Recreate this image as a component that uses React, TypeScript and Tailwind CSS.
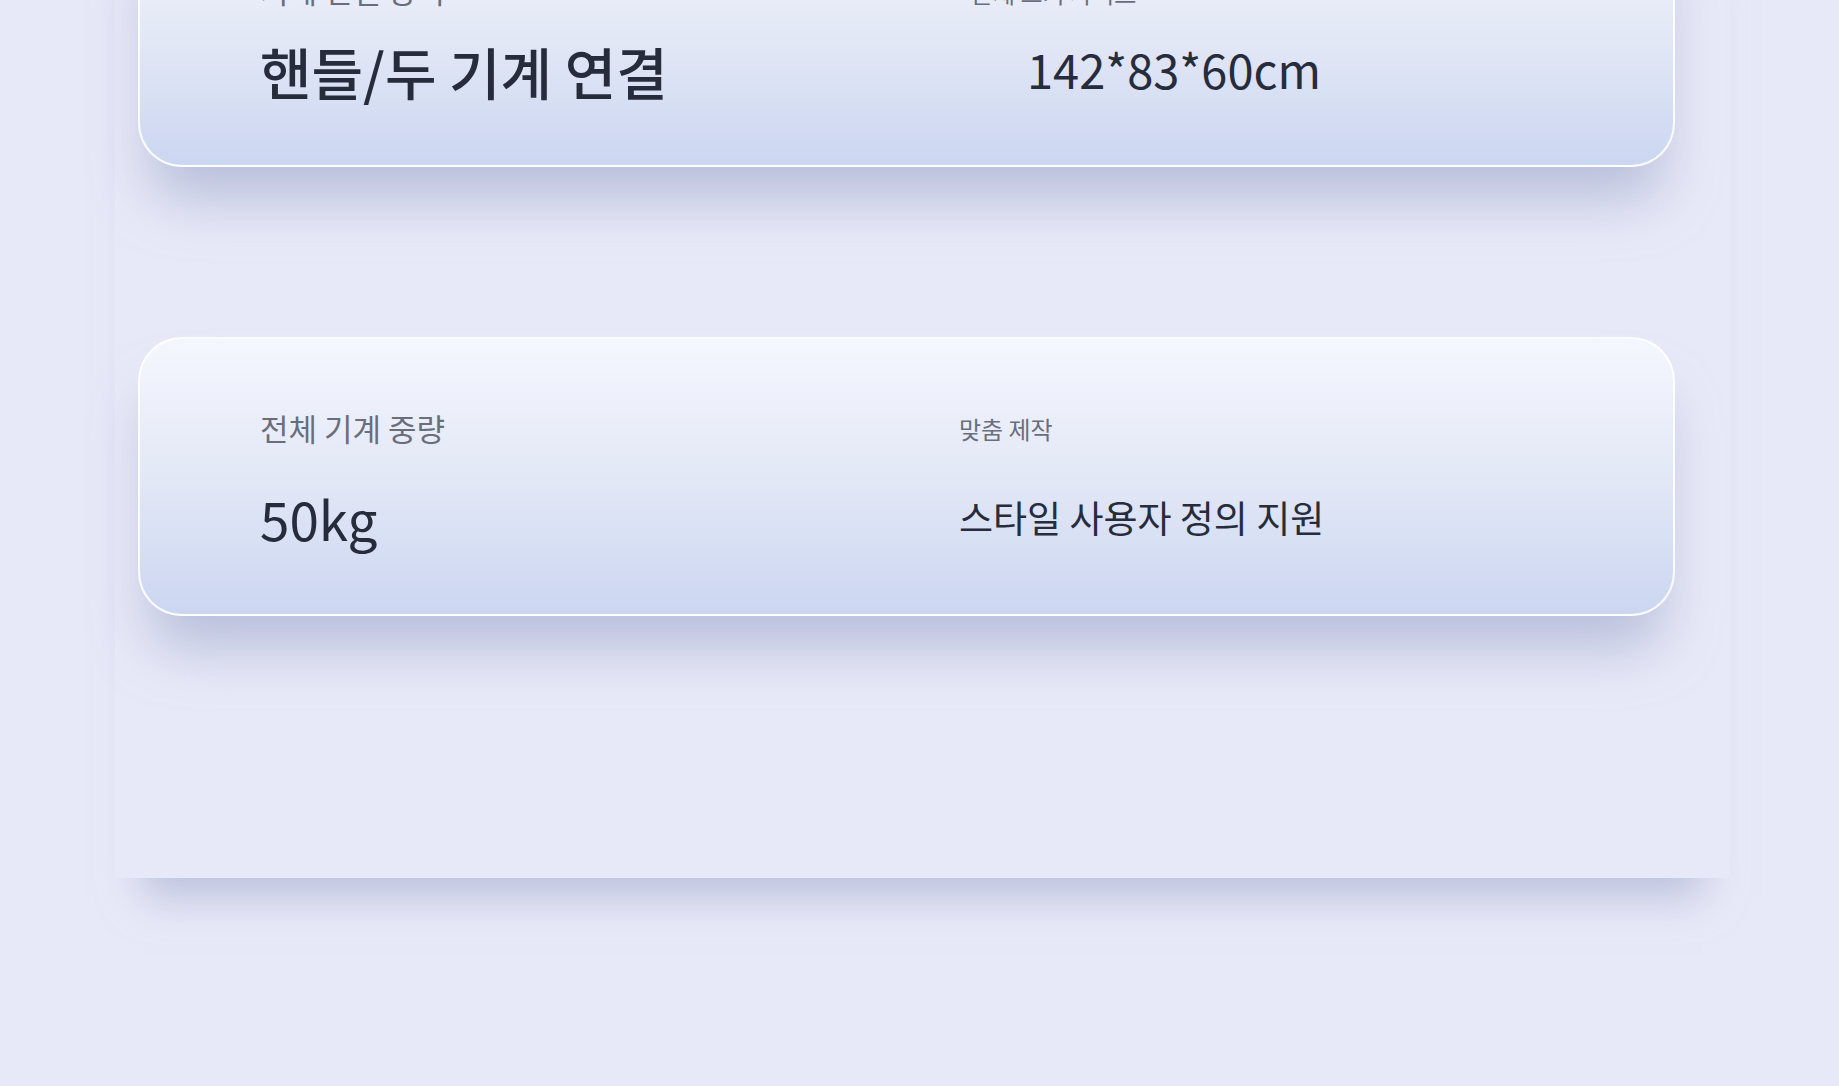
import React from "react";

const font = { fontFamily: '"Noto Sans CJK KR", "Noto Sans", sans-serif' };

export default function App() {
  return (
    <div
      className="w-[1839px] h-[1086px] overflow-hidden bg-[#e8e9f8]"
      style={font}
    >
      <div className="ml-[115px] mt-[-94px] w-[1615px] pl-[23px] pb-[262px] bg-[#e8e9f8] shadow-[0_46px_40px_-28px_rgba(150,158,195,0.55)]">
        {/* Card 1 */}
        <div className="w-[1537px] h-[261px] rounded-[44px] border-2 border-white/90 bg-linear-to-b from-[#f5f7fe] via-[#e3e8f6] to-[#cbd6f1] shadow-[0_44px_54px_-12px_rgba(140,152,192,0.5)] grid grid-cols-[833px_1fr] pl-[120px]">
          <div className="flex flex-col pt-[66px]">
            <div className="text-[31px] leading-none text-[#6a6e7c] whitespace-nowrap">
              기계 연결 방식
            </div>
            <div className="mt-[38px] text-[56px] leading-none font-medium text-[#272c3c] whitespace-nowrap">
              핸들/두 기계 연결
            </div>
          </div>
          <div className="flex flex-col pt-[73px] -ml-[122px]">
            <div className="text-[24px] leading-none text-[#6a6e7c] whitespace-nowrap">
              본체 크기 사이즈
            </div>
            <div className="mt-[40px] ml-[56px] text-[47px] leading-none text-[#272c3c] whitespace-nowrap">
              142*83*60cm
            </div>
          </div>
        </div>

        {/* Card 2 */}
        <div className="mt-[170px] w-[1537px] h-[279px] rounded-[44px] border-2 border-white/90 bg-linear-to-b from-[#f5f7fe] via-[#e3e8f6] to-[#cbd6f1] shadow-[0_44px_54px_-12px_rgba(140,152,192,0.5)] grid grid-cols-[833px_1fr] pl-[120px]">
          <div className="flex flex-col pt-[73px]">
            <div className="text-[31px] leading-none text-[#6a6e7c] whitespace-nowrap">
              전체 기계 중량
            </div>
            <div className="mt-[49px] text-[53px] leading-none text-[#272c3c] whitespace-nowrap">
              50kg
            </div>
          </div>
          <div className="flex flex-col pt-[78px] -ml-[134px]">
            <div className="text-[24px] leading-none text-[#6a6e7c] whitespace-nowrap">
              맞춤 제작
            </div>
            <div className="mt-[58px] text-[37px] leading-none text-[#272c3c] whitespace-nowrap">
              스타일 사용자 정의 지원
            </div>
          </div>
        </div>
      </div>
    </div>
  );
}
